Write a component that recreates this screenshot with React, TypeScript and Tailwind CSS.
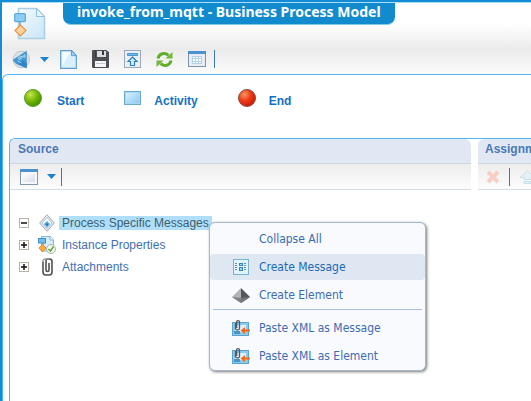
import type { ReactNode } from "react";

const uiFont = "font-['DejaVu_Sans_Condensed','Noto_Sans',sans-serif]";

function ProcessIcon() {
  return (
    <svg width="32" height="34" viewBox="0 0 32 34" aria-hidden="true">
      <defs>
        <linearGradient id="doc" x1="0" y1="0" x2="1" y2="1">
          <stop offset="0" stopColor="#f4fbff" />
          <stop offset="1" stopColor="#c9e5f6" />
        </linearGradient>
      </defs>
      <path d="M4.500 1.500h18l8 8v22h-26z" fill="url(#doc)" stroke="#a9d0e0" strokeWidth="1.500" />
      <path d="M22.500 1.500v8h8z" fill="#e6f4fb" stroke="#8dc3e0" />
      <path d="M6 15v4" stroke="#777" />
      <rect x=".7" y="6.700" width="10.600" height="8" rx=".5" fill="#8ccdf5" stroke="#459ed3" />
      <path d="M6.500 18l5.500 5.500L6.500 29 1 23.500z" fill="#ffd49e" stroke="#ea9243" strokeWidth="1.200" />
    </svg>
  );
}

function BackIcon() {
  return (
    <svg width="18" height="19" viewBox="0 0 18 19" aria-hidden="true">
      <circle cx="9.300" cy="9.500" r="8.200" fill="#dde2e7" stroke="#bcc5ce" />
      <path d="M1 10L14.500 1.200V18L4 13.500z" fill="#3f97d6" stroke="#4c90c4" strokeWidth=".6" />
      <path d="M10 10.500l4.500 2V18L6 14z" fill="#2f83c6" />
      <path d="M6 8l3-2 1.500 1.500L7.500 10zM10.500 6.500l2.500-2v3zM5.500 11l4 2" stroke="#b5dcf7" strokeWidth=".8" fill="#6db6e8" />
    </svg>
  );
}

function PageIcon() {
  return (
    <svg width="17" height="19" viewBox="0 0 17 19" aria-hidden="true">
      <path d="M.7 .7h11l4.600 5v12.600H.7z" fill="#d8effe" stroke="#5f9fcf" strokeWidth="1.200" />
      <path d="M2 2h8L3 15H2z" fill="#f3fbff" />
      <path d="M11.500 .7v5h4.800z" fill="#a4d3f2" stroke="#4c91c7" strokeWidth=".8" />
    </svg>
  );
}

function SaveIcon() {
  return (
    <svg width="17" height="18" viewBox="0 0 17 18" aria-hidden="true">
      <path d="M0 1q0-1 1-1h13l3 2v15q0 1-1 1H1q-1 0-1-1z" fill="#4d4f55" />
      <path d="M3 0h1v8H3zM13 0h1v8h-1z" fill="#393b40" />
      <path d="M5 1h9v6H5z" fill="#d9dce1" />
      <path d="M10 1h2v4h-2z" fill="#36383c" />
      <path d="M3 11h11v6H3z" fill="#f5f6f7" />
      <path d="M4 13.500h9" stroke="#c4c7cb" />
    </svg>
  );
}

function UploadIcon() {
  return (
    <svg width="17" height="18" viewBox="0 0 17 18" aria-hidden="true">
      <rect x=".5" y=".5" width="16" height="17" fill="#e9eff5" stroke="#9ba9b8" />
      <path d="M3.500 3.500h10v2h-10z" fill="#6db8ea" stroke="#3487c2" strokeWidth=".8" />
      <path d="M8.500 7L13 11.500h-2.500v4h-4v-4H4z" fill="#d4ecfb" stroke="#2f80bd" strokeWidth="1.200" />
    </svg>
  );
}

function RefreshIcon() {
  return (
    <svg width="17" height="17" viewBox="0 0 17 17" aria-hidden="true">
      <path d="M2 7.500C3 2.500 9 1 12.500 4.500" fill="none" stroke="#62ad2b" strokeWidth="3" />
      <path d="M16.500 1v6.500H9.500z" fill="#72b83b" />
      <path d="M15 9.500C14 14.500 8 16 4.500 12.500" fill="none" stroke="#62ad2b" strokeWidth="3" />
      <path d="M.5 16V9.500h7z" fill="#72b83b" />
    </svg>
  );
}

function CalendarIcon() {
  return (
    <svg width="18" height="16" viewBox="0 0 18 16" aria-hidden="true">
      <rect x=".5" y=".5" width="17" height="15" fill="#e8edf3" stroke="#7f93aa" />
      <path d="M0 0h18v3H0z" fill="#4b91ce" />
      <path d="M4 5h10v8H4z" fill="#b3d0e9" />
      <path d="M5 6h2v1H5zM8 6h2v1H8zM11 6h2v1h-2zM5 8h2v2H5zM8 8h2v2H8zM11 8h2v2h-2zM5 11h2v1H5zM8 11h2v1H8zM11 11h2v1h-2z" fill="#fff" />
    </svg>
  );
}

function WindowIcon() {
  return (
    <svg width="18" height="16" viewBox="0 0 18 16" aria-hidden="true">
      <defs>
        <linearGradient id="pane" x1="0" y1="0" x2="1" y2="1">
          <stop offset="0" stopColor="#fff" />
          <stop offset="1" stopColor="#d5dbea" />
        </linearGradient>
      </defs>
      <rect x=".5" y=".5" width="17" height="15" fill="#f7f8fa" stroke="#8296a8" />
      <path d="M0 0h18v3H0z" fill="#4b91ce" />
      <path d="M3 5h12v8H3z" fill="url(#pane)" />
    </svg>
  );
}

function Caret() {
  return (
    <svg width="9" height="5" viewBox="0 0 9 5" aria-hidden="true">
      <path d="M0 0h9L4.500 5z" fill="#1a82d0" />
    </svg>
  );
}

function Ball({ id, light, mid, dark, rim }: { id: string; light: string; mid: string; dark: string; rim: string }) {
  return (
    <svg width="18" height="18" viewBox="0 0 18 18" aria-hidden="true">
      <defs>
        <radialGradient id={id} cx=".35" cy=".3" r=".75">
          <stop offset="0" stopColor={light} />
          <stop offset=".5" stopColor={mid} />
          <stop offset="1" stopColor={dark} />
        </radialGradient>
      </defs>
      <circle cx="9" cy="9" r="8.500" fill={`url(#${id})`} stroke={rim} />
    </svg>
  );
}

function ActivityIcon() {
  return (
    <svg width="17" height="14" viewBox="0 0 17 14" aria-hidden="true">
      <defs>
        <linearGradient id="act" x1="0" y1="0" x2="1" y2="1">
          <stop offset="0" stopColor="#e3f5ff" />
          <stop offset="1" stopColor="#83c5ee" />
        </linearGradient>
      </defs>
      <rect x=".5" y=".5" width="16" height="13" fill="url(#act)" stroke="#6ba9cd" />
      <rect x="1.500" y="1.500" width="14" height="11" fill="none" stroke="#a6d7f4" />
    </svg>
  );
}

function MessagesIcon() {
  return (
    <svg width="16" height="18" viewBox="0 0 16 18" aria-hidden="true">
      <path d="M8 .7L15.300 9 8 17.300 .7 9z" fill="#e5e9ee" stroke="#9facb9" />
      <path d="M8 3.500L13 9l-5 5.500L3 9z" fill="#fafcfe" stroke="#a8b5c2" strokeWidth=".8" />
      <path d="M8 7l3 3-3 3.500L5 10z" fill="#5aaeea" />
      <path d="M8 9l1.500 1.500L8 12l-1.500-1.500z" fill="#1976bf" />
    </svg>
  );
}

function PropertiesIcon() {
  return (
    <svg width="18" height="18" viewBox="0 0 18 18" aria-hidden="true">
      <path d="M3.500 .5h9l3 3.500v11h-12z" fill="#d7edf9" stroke="#80b9dc" />
      <path d="M12 .5V4h3.500" fill="#f5fbff" stroke="#80b9dc" />
      <path d="M5 6v4" stroke="#777" />
      <rect x=".5" y="2.500" width="7" height="4.500" fill="#75bdeb" stroke="#3e91c8" />
      <path d="M4.500 8.500L8 12l-3.500 4L1 12z" fill="#ffab4a" stroke="#e98724" />
      <circle cx="13" cy="13" r="4.500" fill="#f2f5f2" stroke="#a9b2b3" />
      <path d="M10.500 13l2 2 3-4.500" fill="none" stroke="#63a930" strokeWidth="1.500" />
    </svg>
  );
}

function ClipIcon() {
  return (
    <svg width="11" height="18" viewBox="0 0 11 18" aria-hidden="true">
      <path d="M1 3.500V14q0 3 3 3h3q3 0 3-3V3.500Q10 1 7.500 1H6Q4 1 4 3v9q0 1.500 1.500 1.500T7 12V5" fill="none" stroke="#505052" strokeWidth="1.600" />
      <path d="M1 4V3q0-2 2.500-2H7" fill="none" stroke="#9a9b9e" strokeWidth="1.300" />
    </svg>
  );
}

function CreateMessageIcon() {
  return (
    <svg width="16" height="16" viewBox="0 0 16 16" aria-hidden="true">
      <rect x=".5" y=".5" width="15" height="15" fill="#e1f3fa" stroke="#76b4cf" />
      <path d="M2 4.500h3M2 6.500h3M2 8.500h3M2 10.500h3M11 4.500h3M11 6.500h3M11 8.500h3M11 10.500h3" stroke="#70899b" strokeDasharray="2 1" />
      <path d="M6 4h4v3H6zM6 8h4v4H6z" fill="#3682bd" />
      <path d="M7 5h2v1H7zM7 9h2v2H7z" fill="#a5d7f5" />
    </svg>
  );
}

function CreateElementIcon() {
  return (
    <svg width="18" height="15" viewBox="0 0 18 15" aria-hidden="true">
      <path d="M9 0L0 9l9 6z" fill="#b0b3b8" />
      <path d="M9 0l9 9-9 6z" fill="#55575d" />
      <path d="M0 9l9 1v5z" fill="#7d8086" />
      <path d="M18 9l-9 1v5z" fill="#74767b" />
    </svg>
  );
}

function PasteIcon() {
  return (
    <svg width="18" height="16" viewBox="0 0 18 16" aria-hidden="true">
      <rect x=".5" y="2.500" width="16" height="13" fill="#8dc9eb" stroke="#5aa3cd" />
      <path d="M3 5h11v7H3z" fill="#dff1fa" />
      <path d="M2 11h6v3H2z" fill="#4695c7" />
      <path d="M3.500 3v5.500q0 1.500 2 1.500t2-1.500V2Q7.500.7 6 .7T4.700 2v6" fill="none" stroke="#535960" strokeWidth="1.300" />
      <path d="M18 9.500h-5V7L8.500 10.500 13 14v-2.500h5z" fill="#f56715" />
    </svg>
  );
}

function DeleteIcon() {
  return (
    <svg width="14" height="14" viewBox="0 0 14 14" aria-hidden="true">
      <path d="M2 2l10 10M12 2L2 12" stroke="#f7cfc3" strokeWidth="4" />
    </svg>
  );
}

function UpIcon() {
  return (
    <svg className="shrink-0" width="17" height="14" viewBox="0 0 17 14" aria-hidden="true">
      <path d="M8.500 1L16 7.500h-4v2H5v-2H1zM5 11.500h7v2H5z" fill="#e3f1f7" stroke="#c8dfe9" />
    </svg>
  );
}

function ToolButton({ label, children }: { label: string; children: ReactNode }) {
  return (
    <button type="button" aria-label={label} className="flex h-5 shrink-0 items-center justify-center">
      {children}
    </button>
  );
}

function Legend({ label, children }: { label: string; children: ReactNode }) {
  return (
    <button type="button" className="flex h-[18px] items-center text-xs font-bold text-[#1470c4]">
      {children}
      <span className="pt-[6px]">{label}</span>
    </button>
  );
}

function TreeRow({ label, open, selected, children }: { label: string; open?: boolean; selected?: boolean; children: ReactNode }) {
  return (
    <li role="treeitem" aria-expanded={!!open} aria-selected={!!selected} className="flex h-[22px] items-center">
      <button
        type="button"
        aria-label={`Toggle ${label}`}
        className="flex size-[10px] items-center justify-center border border-[#b8b3a6] bg-white"
      >
        <svg width="6" height="6" viewBox="0 0 6 6" aria-hidden="true">
          <path d={open ? "M0 3h6" : "M0 3h6M3 0v6"} stroke="#111" strokeWidth="1.500" />
        </svg>
      </button>
      <span className="mr-[2px] ml-2 flex w-[20px] justify-center">{children}</span>
      <span className={selected ? "bg-[#afdffa] px-[3px] leading-[14px] text-[#41606f]" : "px-[3px] leading-[14px]"}>{label}</span>
    </li>
  );
}

function MenuItem({ label, active, children }: { label: string; active?: boolean; children?: ReactNode }) {
  return (
    <button
      type="button"
      role="menuitem"
      className={
        active
          ? "my-px flex h-[26px] w-full items-center rounded bg-[#dfe7f3] pl-[22px] text-[#1d69b6]"
          : "my-px flex h-[26px] w-full items-center rounded pl-[22px] text-[#3d6cb0]"
      }
    >
      <span className="mr-[9px] flex w-[18px] justify-center">{children}</span>
      {label}
    </button>
  );
}

export default function App() {
  return (
    <div className="relative flex h-screen flex-col overflow-hidden border-t-2 border-l-2 border-[#148cd3] bg-white font-['Liberation_Sans',Arial,sans-serif] text-xs">
      <header className="h-[72px] shrink-0 border-t border-[#a9dcf6] bg-linear-to-b from-white from-30% via-[#ebebeb] via-65% to-[#fbfbfb]">
        <div className="flex h-[42px] items-start">
          <div className="pt-1 pl-3">
            <ProcessIcon />
          </div>
          <h1 className="ml-[17px] h-[22px] rounded-b-lg border-b border-[#83c8ec] bg-[#118ace] px-[14px] font-['Noto_Sans',sans-serif] text-sm leading-[18px] font-bold whitespace-nowrap text-white">
            invoke_from_mqtt - Business Process Model
          </h1>
        </div>
        <div className="flex h-[28px] items-center pl-[10px]" role="toolbar" aria-label="Model">
          <ToolButton label="Back"><BackIcon /></ToolButton>
          <span className="ml-[10px] flex"><ToolButton label="Back options"><Caret /></ToolButton></span>
          <div className="ml-[11px] flex items-center gap-[15px]">
            <ToolButton label="New"><PageIcon /></ToolButton>
            <ToolButton label="Save"><SaveIcon /></ToolButton>
            <ToolButton label="Upload"><UploadIcon /></ToolButton>
            <ToolButton label="Refresh"><RefreshIcon /></ToolButton>
            <ToolButton label="Schedule"><CalendarIcon /></ToolButton>
          </div>
          <span className="ml-2 h-[18px] w-px bg-[#3c78b8]" />
        </div>
      </header>

      <main className="flex min-h-0 grow flex-col rounded-tl-md border-t border-l border-[#50b8f0] pl-[6px]">
        <div className="flex h-[63px] shrink-0 items-start pt-[14px] pl-[15px]">
          <div className="flex items-center gap-10">
            <Legend label="Start">
              <span className="mr-[15px]"><Ball id="green" light="#c7e64b" mid="#79b90b" dark="#3f8b00" rim="#609b24" /></span>
            </Legend>
            <Legend label="Activity">
              <span className="mr-[13px]"><ActivityIcon /></span>
            </Legend>
            <Legend label="End">
              <span className="mr-[13px]"><Ball id="red" light="#ff9360" mid="#ed3a15" dark="#c51508" rim="#85533f" /></span>
            </Legend>
          </div>
        </div>

        <div className="flex min-h-0 grow gap-[7px] rounded-tl-md border-t border-l border-[#50b8f0]">
          <section className="w-[461px] shrink-0">
            <h2 className="h-[25px] rounded-t-md border-b border-[#ccd8e6] bg-[#e1e8f4] pl-2 leading-[20px] font-bold text-[#4a78b6]">Source</h2>
            <div className="flex h-[26px] items-center border-b border-[#d3dde7] bg-linear-to-b from-[#ededed] to-[#fcfcfc] pl-[10px]" role="toolbar" aria-label="Source">
              <ToolButton label="View"><WindowIcon /></ToolButton>
              <span className="ml-[9px] flex"><ToolButton label="View options"><Caret /></ToolButton></span>
              <span className="ml-[5px] h-[18px] w-px bg-[#3c78b8]" />
            </div>
            <ul role="tree" aria-label="Source" className="pt-[22px] pl-[9px] text-[#3f6fb1]">
              <TreeRow label="Process Specific Messages" open selected><MessagesIcon /></TreeRow>
              <TreeRow label="Instance Properties"><PropertiesIcon /></TreeRow>
              <TreeRow label="Attachments"><ClipIcon /></TreeRow>
            </ul>
          </section>
          <section className="min-w-0 grow overflow-hidden">
            <h2 className="h-[25px] rounded-tl-md border-b border-[#ccd8e6] bg-[#e1e8f4] pl-[7px] leading-[20px] font-bold text-[#4a78b6]">Assignments</h2>
            <div className="flex h-[26px] items-center border-b border-[#d3dde7] bg-linear-to-b from-[#ededed] to-[#fcfcfc] pl-2" role="toolbar" aria-label="Assignments">
              <ToolButton label="Delete"><DeleteIcon /></ToolButton>
              <span className="mx-[9px] h-[18px] w-px shrink-0 bg-[#3c78b8]" />
              <ToolButton label="Move up"><UpIcon /></ToolButton>
            </div>
          </section>
        </div>
      </main>

      <div
        role="menu"
        className={`${uiFont} absolute top-[220px] left-[207px] flex w-[217px] flex-col rounded-md border border-[#a5b8d0] bg-[#f8fafd] pt-[2px] text-xs shadow-[1px_1px_3px_#777]`}
      >
        <MenuItem label="Collapse All" />
        <MenuItem label="Create Message" active><CreateMessageIcon /></MenuItem>
        <MenuItem label="Create Element"><CreateElementIcon /></MenuItem>
        <div role="separator" className="mb-1 mx-[3px] h-px bg-[#a7bfe0]" />
        <MenuItem label="Paste XML as Message"><PasteIcon /></MenuItem>
        <MenuItem label="Paste XML as Element"><PasteIcon /></MenuItem>
      </div>
    </div>
  );
}
